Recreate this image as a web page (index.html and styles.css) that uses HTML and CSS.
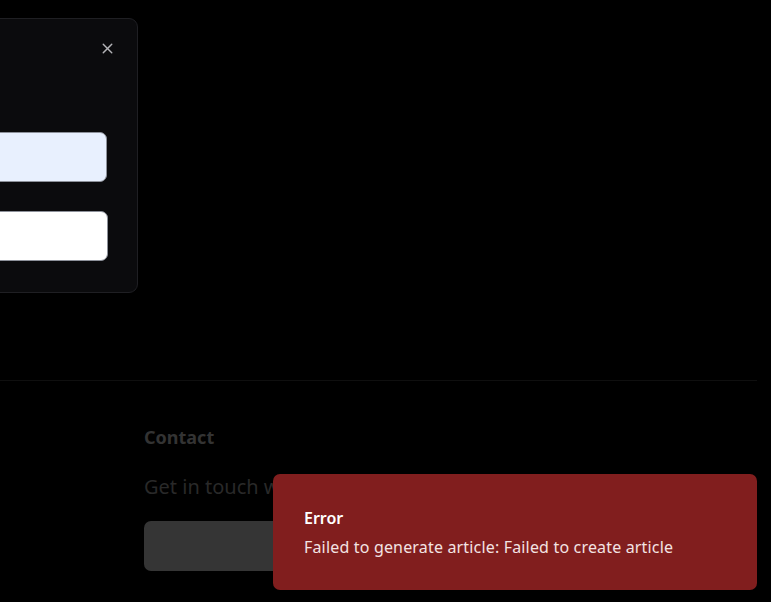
FILE: index.html
```html
<!DOCTYPE html>
<html lang="en">
<head>
<meta charset="utf-8">
<title>Generate article</title>
<link rel="stylesheet" href="styles.css">
</head>
<body>
<div class="page">
  <div class="main"></div>
  <footer class="footer">
    <div class="footer-inner">
      <div class="footer-col">
        <h3 class="footer-title">Contact</h3>
        <p class="footer-text">Get in touch with us</p>
        <button class="footer-btn" type="button" aria-label="Contact us"></button>
      </div>
    </div>
  </footer>
</div>

<div class="dialog" role="dialog">
  <button class="dialog-close" type="button" aria-label="Close">
    <svg width="16" height="16" viewBox="0 0 24 24" fill="none" stroke="currentColor" stroke-width="2" stroke-linecap="round" stroke-linejoin="round"><path d="M18 6 6 18"/><path d="m6 6 12 12"/></svg>
  </button>
  <div class="dialog-body">
    <input class="field field-autofill" type="text" value="">
    <input class="field" type="text" value="">
  </div>
</div>

<div class="toast" role="alert">
  <div class="toast-title">Error</div>
  <div class="toast-desc">Failed to generate article: Failed to create article</div>
</div>
</body>
</html>
```

FILE: styles.css
```css
* { box-sizing: border-box; }
html, body {
  margin: 0;
  padding: 0;
  background: #000;
  height: 100%;
  overflow: hidden;
  font-family: "Noto Sans", "Open Sans", sans-serif;
}
.page {
  display: flex;
  flex-direction: column;
  min-height: 100%;
}
.main {
  height: 380px;
}
.footer {
  border-top: 1px solid #0f0f0f;
  margin-right: 14px;
}
.footer-inner {
  padding: 44px 0 0 144px;
}
.footer-col {
  display: flex;
  flex-direction: column;
  align-items: flex-start;
}
.footer-title {
  margin: 0;
  font-size: 18px;
  font-weight: 700;
  color: #333333;
  line-height: 24px;
}
.footer-text {
  margin: 24px 0 0 0;
  font-size: 20px;
  color: #292929;
  line-height: 28px;
  white-space: nowrap;
}
.footer-btn {
  margin-top: 20px;
  width: 300px;
  height: 50px;
  border: 0;
  border-radius: 7px;
  background: #353535;
  font: inherit;
}
.dialog {
  position: absolute;
  top: 18px;
  left: -300px;
  width: 438px;
  height: 275px;
  background: #0b0b0d;
  border: 1px solid #1f1f23;
  border-radius: 9px;
}
.dialog-close {
  position: absolute;
  top: 21px;
  right: 21px;
  width: 17px;
  height: 17px;
  padding: 0;
  border: 0;
  background: none;
  color: #b4b4b8;
  display: flex;
}
.dialog-close svg {
  width: 17px;
  height: 17px;
}
.dialog-body {
  display: flex;
  flex-direction: column;
  gap: 29px;
  padding: 113px 30px 0 0;
}
.field {
  height: 50px;
  border-radius: 7px;
  border: 1px solid #8d919a;
  background: #fff;
  width: 407px;
  font: inherit;
}
.field-autofill {
  background: #e8f0fe;
  height: 50px;
  width: 406px;
}
.toast {
  position: fixed;
  right: 14px;
  bottom: 12px;
  width: 484px;
  height: 116px;
  background: #811e1e;
  border-radius: 7px;
  padding: 32px 30px 0 31px;
  color: #fff;
}
.toast-title {
  font-size: 16px;
  font-weight: 600;
  line-height: 24px;
}
.toast-desc {
  margin-top: 6px;
  font-size: 16px;
  line-height: 22px;
  color: #f3e3e3;
  letter-spacing: 0.17px;
}
```
